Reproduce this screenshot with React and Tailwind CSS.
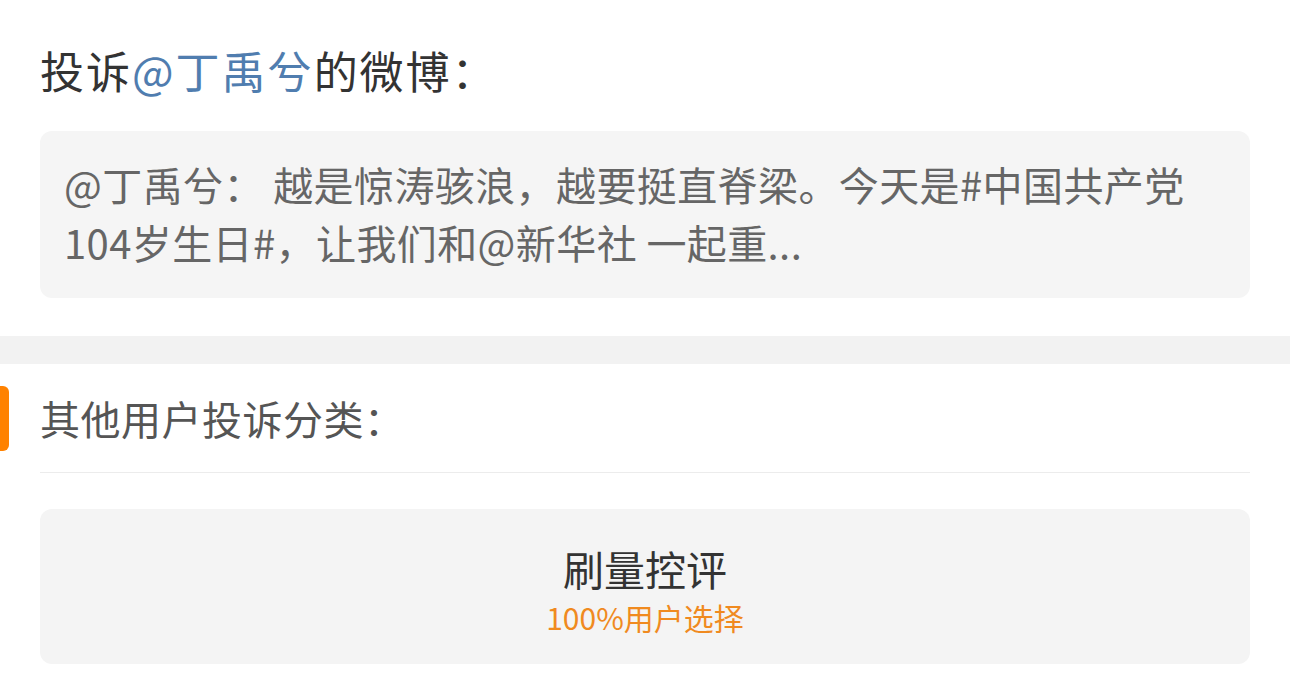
import React from 'react';

const font = { fontFamily: '"Noto Sans CJK SC", "Noto Sans", sans-serif' };

export default function App() {
  return (
    <div className="w-[1290px] h-[686px] bg-white overflow-hidden" style={font}>
      {/* Target weibo */}
      <div className="px-10 pt-[40px]">
        <h1 className="text-[44px] leading-[60px] tracking-[2px] text-[#333333]">
          投诉<span className="text-[#507daf]">@丁禹兮</span>的微博：
        </h1>
        <div className="mt-[31px] h-[167px] rounded-xl bg-[#f5f5f5] px-6 pt-[24px]">
          <p className="text-[40px] leading-[58px] tracking-[0.4px] text-[#666666]">
            @丁禹兮：&nbsp;越是惊涛骇浪，越要挺直脊梁。今天是#中国共产党
            <br />
            104岁生日#，让我们和@新华社 一起重...
          </p>
        </div>
      </div>

      <div className="mt-[38px] h-[28px] bg-[#f2f2f2]" />

      {/* Other users */}
      <div className="relative">
        <div className="absolute left-0 top-[22px] h-[65px] w-[9px] rounded-r-md bg-[#ff8200]" />
        <div className="px-10">
          <div className="flex h-[109px] items-center border-b border-[#ececec]">
            <span className="text-[40px] leading-[56px] tracking-[0.5px] text-[#555555]">其他用户投诉分类：</span>
          </div>
        </div>
        <div className="px-10 pt-[36px]">
          <div className="flex h-[155px] flex-col items-center rounded-xl bg-[#f4f4f4] pt-[30px]">
            <div className="text-[41px] leading-[58px] text-[#333333]">刷量控评</div>
            <div className="text-[30px] leading-[40px] text-[#f08a1f]">100%用户选择</div>
          </div>
        </div>
      </div>
    </div>
  );
}
